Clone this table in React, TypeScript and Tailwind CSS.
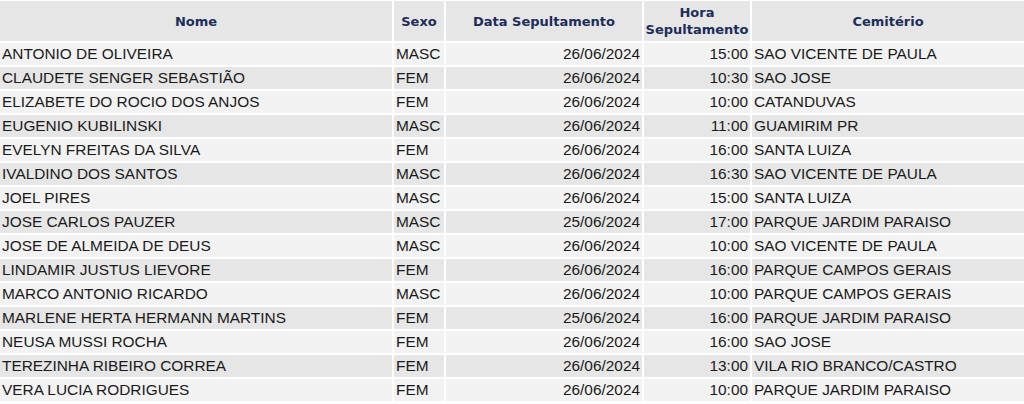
import React from 'react'

type Row = {
  nome: string
  sexo: string
  data: string
  hora: string
  cemiterio: string
}

const rows: Row[] = [
  { nome: 'ANTONIO DE OLIVEIRA', sexo: 'MASC', data: '26/06/2024', hora: '15:00', cemiterio: 'SAO VICENTE DE PAULA' },
  { nome: 'CLAUDETE SENGER SEBASTIÃO', sexo: 'FEM', data: '26/06/2024', hora: '10:30', cemiterio: 'SAO JOSE' },
  { nome: 'ELIZABETE DO ROCIO DOS ANJOS', sexo: 'FEM', data: '26/06/2024', hora: '10:00', cemiterio: 'CATANDUVAS' },
  { nome: 'EUGENIO KUBILINSKI', sexo: 'MASC', data: '26/06/2024', hora: '11:00', cemiterio: 'GUAMIRIM PR' },
  { nome: 'EVELYN FREITAS DA SILVA', sexo: 'FEM', data: '26/06/2024', hora: '16:00', cemiterio: 'SANTA LUIZA' },
  { nome: 'IVALDINO DOS SANTOS', sexo: 'MASC', data: '26/06/2024', hora: '16:30', cemiterio: 'SAO VICENTE DE PAULA' },
  { nome: 'JOEL PIRES', sexo: 'MASC', data: '26/06/2024', hora: '15:00', cemiterio: 'SANTA LUIZA' },
  { nome: 'JOSE CARLOS PAUZER', sexo: 'MASC', data: '25/06/2024', hora: '17:00', cemiterio: 'PARQUE JARDIM PARAISO' },
  { nome: 'JOSE DE ALMEIDA DE DEUS', sexo: 'MASC', data: '26/06/2024', hora: '10:00', cemiterio: 'SAO VICENTE DE PAULA' },
  { nome: 'LINDAMIR JUSTUS LIEVORE', sexo: 'FEM', data: '26/06/2024', hora: '16:00', cemiterio: 'PARQUE CAMPOS GERAIS' },
  { nome: 'MARCO ANTONIO RICARDO', sexo: 'MASC', data: '26/06/2024', hora: '10:00', cemiterio: 'PARQUE CAMPOS GERAIS' },
  { nome: 'MARLENE HERTA HERMANN MARTINS', sexo: 'FEM', data: '25/06/2024', hora: '16:00', cemiterio: 'PARQUE JARDIM PARAISO' },
  { nome: 'NEUSA MUSSI ROCHA', sexo: 'FEM', data: '26/06/2024', hora: '16:00', cemiterio: 'SAO JOSE' },
  { nome: 'TEREZINHA RIBEIRO CORREA', sexo: 'FEM', data: '26/06/2024', hora: '13:00', cemiterio: 'VILA RIO BRANCO/CASTRO' },
  { nome: 'VERA LUCIA RODRIGUES', sexo: 'FEM', data: '26/06/2024', hora: '10:00', cemiterio: 'PARQUE JARDIM PARAISO' },
]

const cols = 'grid grid-cols-[392px_50px_196px_106px_272px] gap-x-[2px]'
const th = 'flex items-center justify-center text-center bg-[#e6e6e6] text-[#1c2d5a] font-bold text-[13px] leading-[17px]'
const td = 'px-[2px] h-[22px] flex items-center text-[15.4px] leading-[18px] text-[#1a1a1a] whitespace-nowrap'

const App = () => {
  return (
    <div className="w-[1024px] h-[404px] bg-white overflow-hidden pt-[1px]">
      <div className="flex flex-col gap-y-[2px]" style={{ fontFamily: '"Liberation Sans", Arial, sans-serif' }}>
        {/* Header */}
        <div className={`${cols} h-[40px]`} style={{ fontFamily: '"DejaVu Sans", Verdana, sans-serif' }}>
          <div className={th}>Nome</div>
          <div className={th}>Sexo</div>
          <div className={th}>Data Sepultamento</div>
          <div className={th}>
            Hora
            <br />
            Sepultamento
          </div>
          <div className={th}>Cemitério</div>
        </div>

        {rows.map((r, i) => {
          const bg = i % 2 === 0 ? 'bg-[#f2f2f2]' : 'bg-[#e6e6e6]'
          return (
            <div key={r.nome} className={cols}>
              <div className={`${td} ${bg}`}>{r.nome}</div>
              <div className={`${td} ${bg}`}>{r.sexo}</div>
              <div className={`${td} ${bg} justify-end`}>{r.data}</div>
              <div className={`${td} ${bg} justify-end`}>{r.hora}</div>
              <div className={`${td} ${bg}`}>{r.cemiterio}</div>
            </div>
          )
        })}
      </div>
    </div>
  )
}

export default App
